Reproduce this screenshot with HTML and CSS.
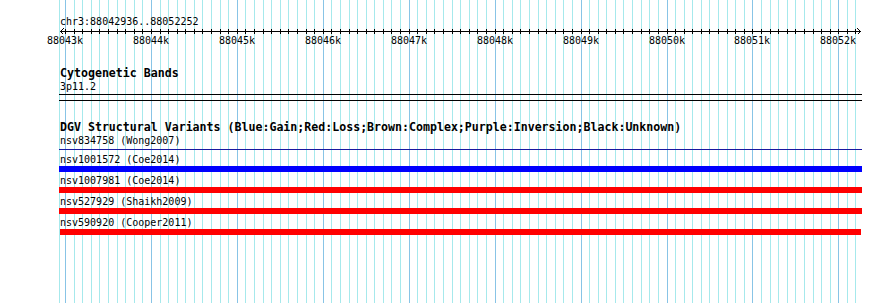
FILE: index.html
```html
<!DOCTYPE html>
<html lang="en">
<head>
<meta charset="utf-8">
<title>chr3:88042936..88052252</title>
<link rel="stylesheet" href="styles.css">
</head>
<body>
<div class="canvas">
  <svg class="grid" width="890" height="303" viewBox="0 0 890 303" shape-rendering="crispEdges" aria-hidden="true">
    <path class="grid-minor" d="M59.5 0v303M74.5 0v303M82.5 0v303M91.5 0v303M99.5 0v303M108.5 0v303M117.5 0v303M125.5 0v303M134.5 0v303M142.5 0v303M160.5 0v303M168.5 0v303M177.5 0v303M185.5 0v303M194.5 0v303M202.5 0v303M211.5 0v303M220.5 0v303M228.5 0v303M245.5 0v303M254.5 0v303M263.5 0v303M271.5 0v303M280.5 0v303M288.5 0v303M297.5 0v303M306.5 0v303M314.5 0v303M331.5 0v303M340.5 0v303M349.5 0v303M357.5 0v303M366.5 0v303M374.5 0v303M383.5 0v303M391.5 0v303M400.5 0v303M417.5 0v303M426.5 0v303M434.5 0v303M443.5 0v303M452.5 0v303M460.5 0v303M469.5 0v303M477.5 0v303M486.5 0v303M503.5 0v303M512.5 0v303M520.5 0v303M529.5 0v303M538.5 0v303M546.5 0v303M555.5 0v303M563.5 0v303M572.5 0v303M589.5 0v303M598.5 0v303M606.5 0v303M615.5 0v303M623.5 0v303M632.5 0v303M641.5 0v303M649.5 0v303M658.5 0v303M675.5 0v303M684.5 0v303M692.5 0v303M701.5 0v303M709.5 0v303M718.5 0v303M727.5 0v303M735.5 0v303M744.5 0v303M761.5 0v303M770.5 0v303M778.5 0v303M787.5 0v303M795.5 0v303M804.5 0v303M813.5 0v303M821.5 0v303M830.5 0v303M847.5 0v303M855.5 0v303"/>
    <path class="grid-major" d="M65.5 0v303M151.5 0v303M237.5 0v303M323.5 0v303M409.5 0v303M495.5 0v303M581.5 0v303M667.5 0v303M752.5 0v303M838.5 0v303"/>
  </svg>

  <div class="panel">
    <div class="seg-name">chr3:88042936..88052252</div>
    <svg class="ruler" width="803" height="6" viewBox="59 28 803 6" shape-rendering="crispEdges" aria-hidden="true">
      <path class="ruler-line" d="M60 31.5H861"/>
      <path class="ruler-line" d="M63.5 28.5L60.5 31.5L63.5 34.5M857.5 28.5L860.5 31.5L857.5 34.5"/>
      <path class="ruler-line" d="M65.5 29v5M74.5 29v5M82.5 29v5M91.5 29v5M99.5 29v5M108.5 29v5M117.5 29v5M125.5 29v5M134.5 29v5M142.5 29v5M151.5 29v5M160.5 29v5M168.5 29v5M177.5 29v5M185.5 29v5M194.5 29v5M202.5 29v5M211.5 29v5M220.5 29v5M228.5 29v5M237.5 29v5M245.5 29v5M254.5 29v5M263.5 29v5M271.5 29v5M280.5 29v5M288.5 29v5M297.5 29v5M306.5 29v5M314.5 29v5M323.5 29v5M331.5 29v5M340.5 29v5M349.5 29v5M357.5 29v5M366.5 29v5M374.5 29v5M383.5 29v5M391.5 29v5M400.5 29v5M409.5 29v5M417.5 29v5M426.5 29v5M434.5 29v5M443.5 29v5M452.5 29v5M460.5 29v5M469.5 29v5M477.5 29v5M486.5 29v5M495.5 29v5M503.5 29v5M512.5 29v5M520.5 29v5M529.5 29v5M538.5 29v5M546.5 29v5M555.5 29v5M563.5 29v5M572.5 29v5M581.5 29v5M589.5 29v5M598.5 29v5M606.5 29v5M615.5 29v5M623.5 29v5M632.5 29v5M641.5 29v5M649.5 29v5M658.5 29v5M667.5 29v5M675.5 29v5M684.5 29v5M692.5 29v5M701.5 29v5M709.5 29v5M718.5 29v5M727.5 29v5M735.5 29v5M744.5 29v5M752.5 29v5M761.5 29v5M770.5 29v5M778.5 29v5M787.5 29v5M795.5 29v5M804.5 29v5M813.5 29v5M821.5 29v5M830.5 29v5M838.5 29v5M847.5 29v5M855.5 29v5"/>
    </svg>
    <div class="ruler-labels">
      <span style="left:-12px">88043k</span>
      <span style="left:74px">88044k</span>
      <span style="left:160px">88045k</span>
      <span style="left:246px">88046k</span>
      <span style="left:332px">88047k</span>
      <span style="left:418px">88048k</span>
      <span style="left:504px">88049k</span>
      <span style="left:590px">88050k</span>
      <span style="left:675px">88051k</span>
      <span style="left:761px">88052k</span>
    </div>

    <section class="track track-cyto">
      <h2 class="track-title">Cytogenetic Bands</h2>
      <div class="label">3p11.2</div>
      <div class="band"></div>
    </section>

    <section class="track track-dgv">
      <h2 class="track-title">DGV Structural Variants (Blue:Gain;Red:Loss;Brown:Complex;Purple:Inversion;Black:Unknown)</h2>
      <div class="feature">
        <div class="label">nsv834758 (Wong2007)</div>
        <div class="glyph glyph-line"></div>
      </div>
      <div class="feature">
        <div class="label">nsv1001572 (Coe2014)</div>
        <div class="glyph glyph-gain"></div>
      </div>
      <div class="feature">
        <div class="label">nsv1007981 (Coe2014)</div>
        <div class="glyph glyph-loss"></div>
      </div>
      <div class="feature">
        <div class="label">nsv527929 (Shaikh2009)</div>
        <div class="glyph glyph-loss"></div>
      </div>
      <div class="feature">
        <div class="label">nsv590920 (Cooper2011)</div>
        <div class="glyph glyph-loss glyph-inset"></div>
      </div>
    </section>
  </div>
</div>
</body>
</html>
```

FILE: styles.css
```css
html, body {
  margin: 0;
  padding: 0;
  background: #ffffff;
}

.canvas {
  position: relative;
  width: 890px;
  height: 303px;
  overflow: hidden;
  background: #ffffff;
}

.grid {
  position: absolute;
  left: 0;
  top: 0;
  display: block;
}

.grid-minor {
  stroke: #a6e9ec;
  stroke-width: 1;
  fill: none;
}

.grid-major {
  stroke: #88c4e6;
  stroke-width: 1;
  fill: none;
}

.panel {
  position: relative;
  margin-left: 59px;
  width: 803px;
  padding-top: 15px;
  font-family: "DejaVu Sans Mono", "Liberation Mono", monospace;
  font-size: 10px;
  line-height: 13px;
  color: #000000;
}

.seg-name,
.label {
  height: 13px;
  padding-left: 1px;
  white-space: nowrap;
}

.ruler {
  display: block;
  width: 803px;
  height: 6px;
  overflow: visible;
}

.ruler-line {
  stroke: #000000;
  stroke-width: 1;
  fill: none;
}

.ruler-labels {
  position: relative;
  height: 13px;
}

.ruler-labels span {
  position: absolute;
  top: 0;
  width: 36px;
  text-align: center;
  white-space: nowrap;
}

.track {
  margin-top: 20px;
}

.track-cyto {
  margin-top: 20px;
}

.track-title {
  margin: 0;
  height: 13px;
  padding-left: 1px;
  font-size: 11.6px;
  font-weight: bold;
  line-height: 13px;
  white-space: nowrap;
}

.band {
  margin-top: 1px;
  height: 5px;
  border-top: 1px solid #000000;
  border-bottom: 1px solid #000000;
}

.feature + .feature {
  margin-top: 2px;
}

.glyph {
  height: 6px;
}

.glyph-line {
  height: 1px;
  margin: 2px 0 3px;
  background: #1818a0;
}

.glyph-gain {
  background: #0000ff;
}

.glyph-loss {
  background: #ff0000;
}

.glyph-inset {
  margin-left: 1px;
  width: 801px;
}
```
